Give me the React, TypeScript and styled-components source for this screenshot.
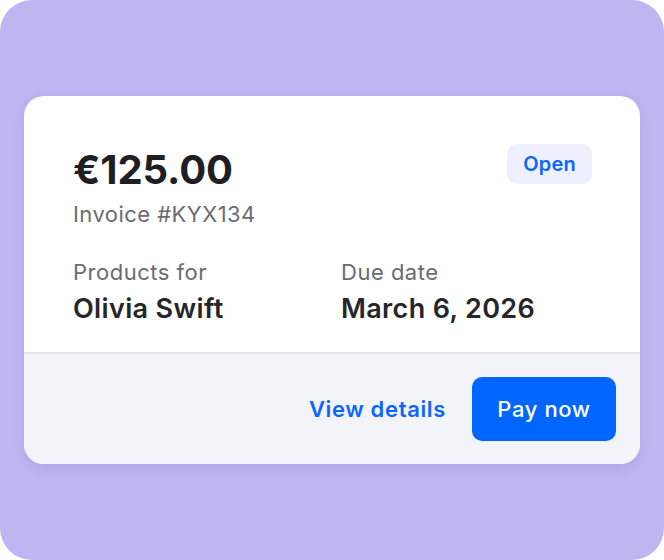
import React from "react";
import styled, { createGlobalStyle } from "styled-components";

const Global = createGlobalStyle`
  html, body { margin: 0; padding: 0; background: #ffffff; }
  body { font-family: Inter, "Noto Sans", sans-serif; -webkit-font-smoothing: antialiased; }
  * { box-sizing: border-box; }
`;

const Stage = styled.div`
  width: 664px;
  height: 560px;
  background: #bdb6f1;
  border-radius: 32px;
  display: flex;
  align-items: center;
  justify-content: center;
`;

const Card = styled.div`
  width: 616px;
  height: 368px;
  background: #ffffff;
  border-radius: 20px;
  overflow: hidden;
  box-shadow: 0 4px 12px rgba(40, 30, 90, 0.1);
  display: flex;
  flex-direction: column;
`;

const Body = styled.div`
  flex: 1;
  padding: 48px 48px 0 49px;
  border-bottom: 2px solid #e3e4ea;
`;

const TopRow = styled.div`
  display: flex;
  justify-content: space-between;
  align-items: flex-start;
`;

const Amount = styled.div`
  font-size: 40px;
  line-height: 48px;
  font-weight: 700;
  color: #1f1f23;
  letter-spacing: -0.1px;
  padding-top: 2px;
`;

const Sub = styled.div`
  margin-top: 6px;
  font-size: 22px;
  line-height: 28px;
  letter-spacing: 0.45px;
  color: #6b6b71;
`;

const Badge = styled.span`
  display: inline-flex;
  align-items: center;
  height: 40px;
  padding: 0 16px;
  border-radius: 10px;
  background: #eef1fd;
  color: #0a66ff;
  font-size: 20px;
  font-weight: 600;
  letter-spacing: 0.2px;
`;

const Details = styled.div`
  margin-top: 30px;
  display: grid;
  grid-template-columns: 268px 1fr;
`;

const Field = styled.div`
  display: flex;
  flex-direction: column;
  gap: 7px;
`;

const Label = styled.div`
  font-size: 22px;
  line-height: 28px;
  letter-spacing: 0.5px;
  color: #6b6b71;
`;

const Value = styled.div`
  font-size: 27px;
  line-height: 32px;
  font-weight: 600;
  letter-spacing: 0.35px;
  color: #26262a;
`;

const Footer = styled.div`
  height: 110px;
  background: #f3f4f9;
  display: flex;
  align-items: center;
  justify-content: flex-end;
  gap: 26px;
  padding: 0 24px;
`;

const LinkButton = styled.button`
  border: none;
  background: none;
  padding: 0;
  font-family: inherit;
  font-size: 22px;
  font-weight: 600;
  letter-spacing: 0.65px;
  color: #0a66ff;
  cursor: pointer;
`;

const PrimaryButton = styled.button`
  border: none;
  height: 64px;
  width: 144px;
  border-radius: 10px;
  background: #0066ff;
  color: #ffffff;
  font-family: inherit;
  font-size: 22px;
  font-weight: 500;
  letter-spacing: 0.6px;
  cursor: pointer;
`;

export default function App() {
  return (
    <>
      <Global />
      <Stage>
        <Card>
          <Body>
            <TopRow>
              <div>
                <Amount>€125.00</Amount>
                <Sub>Invoice #KYX134</Sub>
              </div>
              <Badge>Open</Badge>
            </TopRow>
            <Details>
              <Field>
                <Label>Products for</Label>
                <Value>Olivia Swift</Value>
              </Field>
              <Field>
                <Label>Due date</Label>
                <Value>March 6, 2026</Value>
              </Field>
            </Details>
          </Body>
          <Footer>
            <LinkButton>View details</LinkButton>
            <PrimaryButton>Pay now</PrimaryButton>
          </Footer>
        </Card>
      </Stage>
    </>
  );
}
